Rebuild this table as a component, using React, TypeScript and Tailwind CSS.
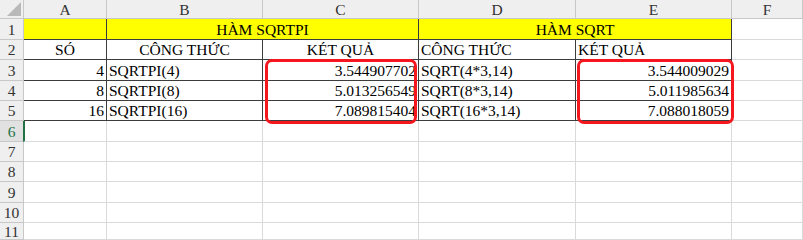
const colWidths = [24, 83, 156, 156, 157, 156, 71];
const rowHeights = [19, 21, 20, 21, 20, 20, 21, 20, 20, 21, 20, 17];
const letters = ["A", "B", "C", "D", "E", "F"];

type Cell = {
  text?: string;
  align?: "left" | "center" | "right";
  span?: number;
  yellow?: boolean;
  dark?: boolean;
};

const tableRows: Cell[][] = [
  [
    { yellow: true, dark: true },
    { text: "HÀM SQRTPI", align: "center", span: 2, yellow: true, dark: true },
    { text: "HÀM SQRT", align: "center", span: 2, yellow: true, dark: true },
    {},
  ],
  [
    { text: "SÓ", align: "center", dark: true },
    { text: "CÔNG THỨC", align: "center", dark: true },
    { text: "KÉT QUẢ", align: "center", dark: true },
    { text: "CÔNG THỨC", dark: true },
    { text: "KÉT QUẢ", dark: true },
    {},
  ],
  [
    { text: "4", align: "right", dark: true },
    { text: "SQRTPI(4)", dark: true },
    { text: "3.544907702", align: "right", dark: true },
    { text: "SQRT(4*3,14)", dark: true },
    { text: "3.544009029", align: "right", dark: true },
    {},
  ],
  [
    { text: "8", align: "right", dark: true },
    { text: "SQRTPI(8)", dark: true },
    { text: "5.013256549", align: "right", dark: true },
    { text: "SQRT(8*3,14)", dark: true },
    { text: "5.011985634", align: "right", dark: true },
    {},
  ],
  [
    { text: "16", align: "right", dark: true },
    { text: "SQRTPI(16)", dark: true },
    { text: "7.089815404", align: "right", dark: true },
    { text: "SQRT(16*3,14)", dark: true },
    { text: "7.088018059", align: "right", dark: true },
    {},
  ],
];

const emptyRow: Cell[] = [{}, {}, {}, {}, {}, {}];

const alignClass = (a?: Cell["align"]) =>
  a === "center" ? "justify-center" : a === "right" ? "justify-end" : "justify-start";

export default function App() {
  const rows = [...tableRows, ...Array.from({ length: 6 }, () => emptyRow)];

  return (
    <div
      className="relative h-[240px] w-[803px] overflow-hidden bg-white text-[15.5px] text-black"
      style={{ fontFamily: '"Liberation Serif", "Times New Roman", serif' }}>
      <div
        className="grid"
        style={{
          gridTemplateColumns: colWidths.map((w) => `${w}px`).join(" "),
          gridTemplateRows: rowHeights.map((h) => `${h}px`).join(" "),
        }}>
        {/* select-all corner */}
        <div className="flex items-end justify-end border-r border-b border-[#c8c8c8] bg-[#efefef] p-[2px]">
          <svg
            width="14"
            height="14"
            viewBox="0 0 14 14">
            <polygon
              points="14,0 14,14 0,14"
              fill="#b9b9b9"
            />
          </svg>
        </div>
        {letters.map((l) => (
          <div
            key={l}
            className="flex items-center justify-center border-r border-b border-[#c8c8c8] bg-[#efefef] pt-px leading-none text-[#333]">
            {l}
          </div>
        ))}
        {rows.map((row, ri) => (
          <RowCells
            key={ri}
            index={ri + 1}
            cells={row}
          />
        ))}
      </div>

      {/* red highlight boxes drawn over the result columns */}
      <div className="absolute top-[59px] left-[265px] h-[65px] w-[152px] rounded-[7px] border-[3px] border-[#f5161e]" />
      <div className="absolute top-[59px] left-[577px] h-[65px] w-[157px] rounded-[7px] border-[3px] border-[#f5161e]" />
    </div>
  );
}

const RowCells = ({ index, cells }: { index: number; cells: Cell[] }) => {
  const active = index === 6;
  return (
    <>
      <div
        className={`flex items-center justify-center border-r border-b border-[#c8c8c8] pt-px leading-none ${
          active ? "bg-[#e1e1e1] text-[#217346]" : "bg-[#efefef] text-[#333]"
        }`}>
        {index}
      </div>
      {cells.map((c, ci) => (
        <div
          key={ci}
          className={`flex items-center border-r border-b px-[2px] pt-px leading-none whitespace-nowrap ${alignClass(
            c.align
          )} ${c.yellow ? "bg-[#ffff00]" : "bg-white"} ${c.dark ? "border-[#3c3c3c]" : "border-[#dadada]"} ${
            active && ci === 0 ? "border-l-2 border-l-[#217346] -ml-px" : ""
          }`}
          style={c.span ? { gridColumn: `span ${c.span}` } : undefined}>
          {c.text}
        </div>
      ))}
    </>
  );
};
